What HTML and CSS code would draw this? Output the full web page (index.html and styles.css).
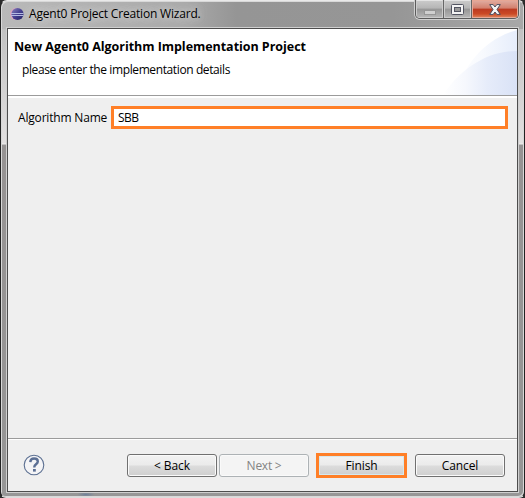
FILE: index.html
```
<!DOCTYPE html>
<html lang="en">
<head>
<meta charset="utf-8">
<title>Agent0 Project Creation Wizard.</title>
<link rel="stylesheet" href="styles.css">
</head>
<body>
<div class="window">
  <header class="titlebar">
    <svg class="app-icon" width="14" height="14" viewBox="0 0 14 14">
      <defs><linearGradient id="orb" x1="0" y1="0" x2="1" y2="1"><stop offset="0" stop-color="#8c86be"/><stop offset=".5" stop-color="#453f91"/><stop offset="1" stop-color="#232062"/></linearGradient></defs>
      <circle cx="6" cy="7" r="6" fill="#dfa5bd"/>
      <circle cx="7.5" cy="7" r="6.1" fill="url(#orb)"/>
      <path d="M1 6.5h12.5M1 8.5h12.5" stroke="#b4b9e2" stroke-width="1"/>
    </svg>
    <span class="title">Agent0 Project Creation Wizard.</span>
    <div class="controls">
      <span class="control minimize"><svg width="12" height="5"><rect x=".5" y=".5" width="11" height="4" fill="#d0d0d0" stroke="#969696"/></svg></span>
      <span class="control maximize"><svg width="13" height="11"><rect x=".5" y=".5" width="12" height="10" rx="1" fill="#f3f3f3" stroke="#525461"/><rect x="3.5" y="3.5" width="6" height="4" fill="#999" stroke="#525461"/></svg></span>
      <span class="control close"><svg width="12" height="11" viewBox="0 0 12 11"><path d="M.7.6h3.5L6 3 7.8.6h3.5L8 5.5l3.3 4.9H7.8L6 8l-1.8 2.4H.7L4 5.5Z" fill="#f6f6f6" stroke="#4b4d5d"/></svg></span>
    </div>
  </header>
  <main class="client">
    <section class="banner">
      <svg class="swoosh" width="110" height="66" viewBox="0 0 110 66">
        <defs>
          <linearGradient id="outer" gradientUnits="userSpaceOnUse" x1="40" x2="110"><stop offset="0" stop-color="#fff"/><stop offset=".5" stop-color="#f8fafe"/><stop offset="1" stop-color="#e6edfb"/></linearGradient>
          <linearGradient id="inner" gradientUnits="userSpaceOnUse" x1="36" x2="110"><stop offset="0" stop-color="#fff"/><stop offset=".3" stop-color="#f6f8fd"/><stop offset=".6" stop-color="#e6ecfa"/><stop offset="1" stop-color="#d9e2f6"/></linearGradient>
        </defs>
        <path d="M48 66C58 34 78 10 110 1v65Z" fill="url(#outer)"/>
        <path d="M36 66C52 42 78 22 110 22v44Z" fill="url(#inner)"/>
      </svg>
      <h1>New Agent0 Algorithm Implementation Project</h1>
      <p>please enter the implementation details</p>
    </section>
    <section class="form">
      <label for="name">Algorithm Name</label>
      <input id="name" type="text" value="SBB">
    </section>
    <footer class="actions">
      <svg class="help" width="22" height="22" viewBox="0 0 22 22">
        <circle cx="11" cy="11" r="9.8" fill="#f4f4f6" stroke="#5b6f91" stroke-width="1.1"/>
        <path d="M7.3 8.1C7.4 5.5 9 4.5 11.1 4.5c2.3 0 3.7 1.2 3.7 3 0 2.7-3.5 2.8-3.5 5.4v.5" fill="none" stroke="#5b6f94" stroke-width="2.4"/>
        <rect x="10" y="15" width="2.8" height="2.6" fill="#5b6f94"/>
      </svg>
      <button class="back">&lt; Back</button>
      <button class="next" disabled>Next &gt;</button>
      <button class="finish">Finish</button>
      <button class="cancel">Cancel</button>
    </footer>
  </main>
</div>
</body>
</html>
```
FILE: styles.css
```
* { box-sizing: border-box; }
body {
  margin: 0;
  background: #2b2b2b;
  font: 12px/16px "Open Sans", "Noto Sans", sans-serif;
  color: #000;
}
.window {
  width: 525px;
  height: 498px;
  display: flex;
  flex-direction: column;
  padding: 0 6px 5px;
  border: 1px solid #222;
  border-top-color: #e9e9e9;
  border-bottom-color: #ddd;
  border-radius: 7px 7px 6px 6px;
  background:
    radial-gradient(ellipse at center, #6f8199, transparent 70%) 76px 100% / 18px 5px no-repeat,
    linear-gradient(90deg, #b9b9b9, #aaa 35%, #959595 45%, #969696 75%, #a8a8a8) 0 0 / 100% 28px no-repeat,
    linear-gradient(#b5b5b5, #c2c2c2 30px, #e2e0e0 142px, #f0f0f0 143px, #969393 144px, #969696);
  box-shadow: inset 1px 1px #d8d8d8, inset -1px -1px #d8d8d8;
}
.titlebar {
  flex: 0 0 27px;
  display: flex;
  align-items: flex-start;
  padding-left: 3px;
}
.app-icon { margin-top: 6px; }
.title {
  margin: 5px 0 0 5px;
  letter-spacing: -.19px;
  text-shadow: 0 0 7px #ddd, 0 0 12px #ccc;
  white-space: nowrap;
}
.controls {
  display: flex;
  height: 19px;
  margin: -1px -1px 0 auto;
  border: 1px solid #5c5c5c;
  border-top: 0;
  border-radius: 0 0 5px 5px;
  box-shadow: 0 0 0 1px #d0d0d0;
  overflow: hidden;
}
.control {
  width: 27px;
  display: grid;
  place-items: center;
  border: 1px solid #ccc;
  border-top-color: #e4e4e4;
  background: linear-gradient(#c9c9c9, #b5b5b5 45%, #969696 50%, #b4b4b4);
}
.control + .control { box-shadow: -1px 0 #666; margin-left: 1px; }
.minimize svg { margin-top: 6px; }
.close {
  width: 46px;
  border-color: #e7a795;
  background: linear-gradient(#e0a99d, #d27f6d 45%, #bb3a22 50%, #cb4925 80%, #dc7a52);
}
.close svg { margin-right: 1px; }
.client {
  flex: 1;
  display: flex;
  flex-direction: column;
  border: 1px solid #4d4d4d;
  background: #efefef;
  box-shadow: 0 0 0 1px #cfcfcf;
}
.banner {
  position: relative;
  flex: 0 0 69px;
  padding: 9px 6px 0;
  background: #fff;
  border-bottom: 2px solid #fff;
  box-shadow: inset 0 -1px #9b9b9b;
}
.swoosh { position: absolute; right: 0; top: 0; }
h1 {
  position: relative;
  margin: 0;
  font-size: 12.5px;
  line-height: 17px;
  letter-spacing: -.04px;
  white-space: nowrap;
}
.banner p { margin: 7px 0 0 8px; letter-spacing: -.39px; }
.form {
  flex: 1;
  display: flex;
  align-items: flex-start;
  padding: 8px 9px 0 10px;
}
.form label { width: 93px; padding-top: 4px; letter-spacing: -.18px; white-space: nowrap; }
.form input {
  flex: 1;
  min-width: 0;
  height: 23px;
  padding: 0 4px;
  border: 3px solid #ff7f27;
  border-radius: 0;
  background: #fff;
  font: inherit;
  letter-spacing: -.6px;
  outline: 0;
}
.actions {
  flex: 0 0 53px;
  display: flex;
  align-items: center;
  padding: 1px 12px 0 15px;
  border-top: 1px solid #9b9b9b;
  box-shadow: inset 0 1px #fff;
}
.help { margin: 0 auto 2px 0; }
button {
  width: 90px;
  height: 23px;
  padding: 1px 0 0;
  border: 1px solid #707070;
  border-radius: 3px;
  background: linear-gradient(#f2f2f2, #ebebeb 48%, #dcdcdc 52%, #cfcfcf);
  box-shadow: inset 0 0 0 1px #fafafa;
  font: inherit;
  letter-spacing: -.1px;
  color: #000;
}
.next { margin-left: 2px; border-color: #adb2b5; background: #f4f4f4; color: #838383; letter-spacing: -.25px; }
.finish {
  width: 91px;
  height: 25px;
  margin: 0 8px 0 7px;
  border: 3px solid #ff7f27;
  border-radius: 0;
  box-shadow: inset 0 0 0 1px #d5e8ee;
}
```
